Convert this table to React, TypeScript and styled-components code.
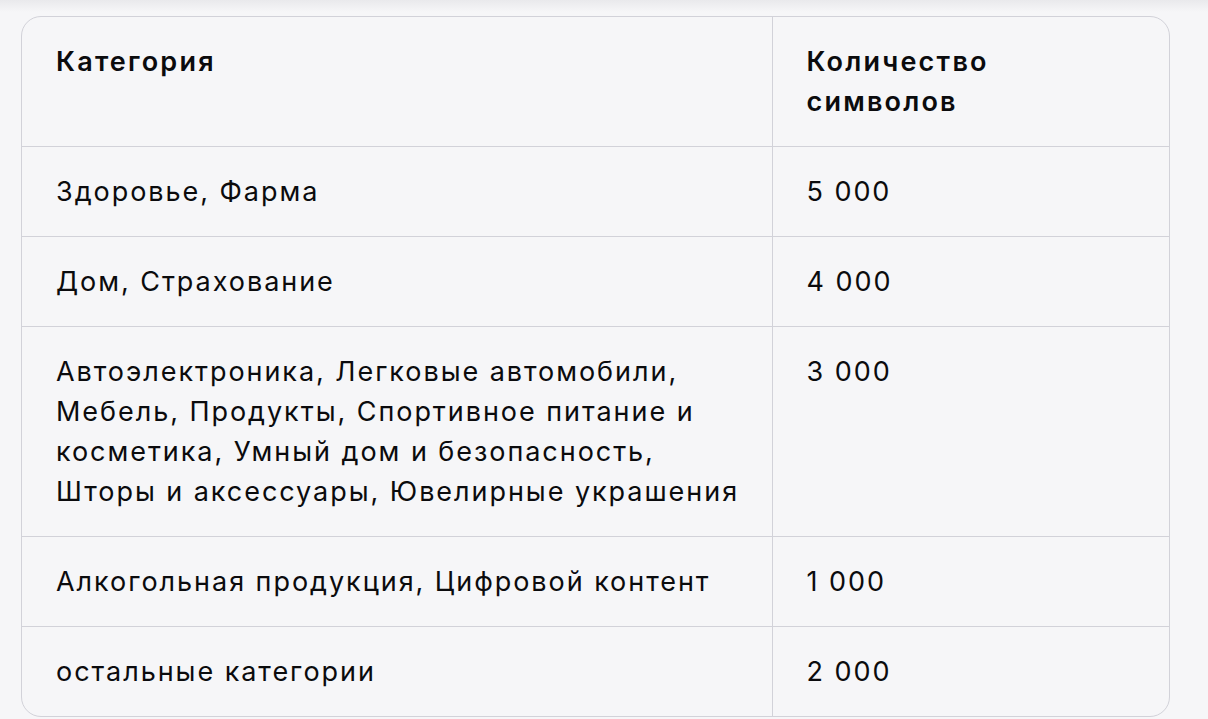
import React from "react";
import styled, { createGlobalStyle } from "styled-components";

const GlobalStyle = createGlobalStyle`
  html, body {
    margin: 0;
    padding: 0;
    background: #f6f6f8;
  }
  body {
    font-family: Inter, "Noto Sans", sans-serif;
    color: #0b0b0d;
  }
`;

const Page = styled.div`
  min-height: 719px;
  padding: 16px 38px 0 21px;
  box-sizing: border-box;
  background: linear-gradient(to bottom, #e9e9ec 0px, #f6f6f8 12px);
`;

const TableWrap = styled.div`
  border: 1px solid #d2d2d9;
  border-radius: 20px;
  overflow: hidden;
  background: #f6f6f8;
`;

const Table = styled.table`
  width: 100%;
  border-collapse: collapse;
  table-layout: fixed;
  font-size: 27px;
  line-height: 40px;
  letter-spacing: 1.95px;
`;

const Row = styled.tr<{ $first?: boolean }>`
  & > * {
    border-top: ${(p) => (p.$first ? "none" : "1px solid #d2d2d9")};
  }
`;

const Cell = styled.td<{ $head?: boolean; $wide?: boolean }>`
  box-sizing: border-box;
  padding: 25px 34px 24px 34px;
  vertical-align: top;
  text-align: left;
  font-weight: ${(p) => (p.$head ? 600 : 400)};
  letter-spacing: ${(p) => (p.$head ? "2.2px" : "inherit")};
  width: ${(p) => (p.$wide ? "750px" : "auto")};
  & + & {
    border-left: 1px solid #d2d2d9;
  }
`;

const Line = styled.span`
  display: block;
  white-space: nowrap;
`;

const rows: [string[], string][] = [
  [["Здоровье, Фарма"], "5 000"],
  [["Дом, Страхование"], "4 000"],
  [
    [
      "Автоэлектроника, Легковые автомобили,",
      "Мебель, Продукты, Спортивное питание и",
      "косметика, Умный дом и безопасность,",
      "Шторы и аксессуары, Ювелирные украшения",
    ],
    "3 000",
  ],
  [["Алкогольная продукция, Цифровой контент"], "1 000"],
  [["остальные категории"], "2 000"],
];

const App = () => (
  <Page>
    <GlobalStyle />
    <TableWrap>
      <Table>
        <thead>
          <Row $first>
            <Cell as="th" $head $wide>
              Категория
            </Cell>
            <Cell as="th" $head>
              Количество
              <br />
              символов
            </Cell>
          </Row>
        </thead>
        <tbody>
          {rows.map(([lines, count]) => (
            <Row key={lines[0]}>
              <Cell>
                {lines.map((l) => (
                  <Line key={l}>{l}</Line>
                ))}
              </Cell>
              <Cell>{count}</Cell>
            </Row>
          ))}
        </tbody>
      </Table>
    </TableWrap>
  </Page>
);

export default App;
